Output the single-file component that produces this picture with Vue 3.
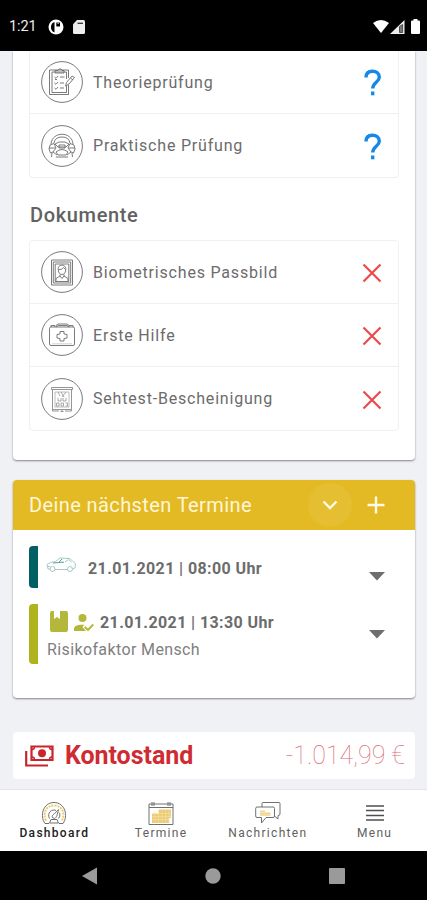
<script setup>
import { ref } from 'vue';

const exams = ref([
    { id: 'theory', label: 'Theorieprüfung' },
    { id: 'practice', label: 'Praktische Prüfung' }
]);

const documents = ref([
    { id: 'photo', label: 'Biometrisches Passbild' },
    { id: 'firstaid', label: 'Erste Hilfe' },
    { id: 'eyetest', label: 'Sehtest-Bescheinigung' }
]);

const tabs = ref([
    { id: 'dashboard', label: 'Dashboard' },
    { id: 'termine', label: 'Termine' },
    { id: 'nachrichten', label: 'Nachrichten' },
    { id: 'menu', label: 'Menu' }
]);

const activeTab = ref('dashboard');
</script>

<template>
    <div class="screen">
        <header class="statusBar">
            <span class="clock">1:21</span>
            <svg class="statusP" viewBox="0 0 16 16">
                <circle cx="8" cy="8" r="7.5" fill="#fff" />
                <path d="M6.500 13.300C1.800 12.500 1.800 3.700 6.500 2.900V13.300Z" fill="#000" />
                <path d="M8.300 3.500H12V7.500H8.300Z" fill="#000" />
                <path d="M9.500 3.500H10.800V5H9.500Z" fill="#bbb" />
            </svg>
            <svg class="statusSd" viewBox="0 0 12 14">
                <path d="M4 0H10.500Q12 0 12 1.500V12.500Q12 14 10.500 14H1.500Q0 14 0 12.500V4.200Z" fill="#eee" />
                <path d="M4.500 3.300H10" stroke="#333" stroke-width="1.300" />
            </svg>
            <div class="statusRight">
                <svg width="16" height="13" viewBox="0 0 16 13">
                    <path d="M0 3Q8-3 16 3L8 13Z" fill="#fff" />
                </svg>
                <svg width="15" height="14" viewBox="0 0 15 14">
                    <path d="M14.500 0V14H0Z" fill="#eee" />
                    <path d="M9.500 6.500V12.500H12.600V4.500Z" fill="#777" stroke="#333" stroke-width="0.800" />
                </svg>
                <svg class="battery" width="9" height="15" viewBox="0 0 9 15">
                    <path d="M2.500 0H6.500V1.500H8Q9 1.500 9 2.500V14Q9 15 8 15H1Q0 15 0 14V2.500Q0 1.500 1 1.500H2.500Z" fill="#fff" />
                </svg>
            </div>
        </header>

        <main class="content">
            <section class="card progressCard">
                <ul class="list examList">
                    <li v-for="exam in exams" :key="exam.id" class="row">
                        <svg class="rowIcon" viewBox="0 0 42 42">
                            <circle cx="21" cy="21" r="20.400" />
                            <g v-if="exam.id === 'theory'">
                                <path d="M27.500 24V33.500H8.500V9H27.500V17" />
                                <path d="M25.500 25V31.500H11V11H25.500V18" />
                                <path d="M14 12V9.500H17L18 8H20L21 9.500H23V12Z" />
                                <path d="M13.500 16L15 17.300L17 15M13.500 22L15 23.300L17 21M13.500 27L15 28.300L17 26" />
                                <path d="M19 16H23.500M19 22H23M19 27H23M14 18.500H16" />
                                <path d="M24.500 25L25.500 21.500L31 15L33.500 16.500L28 23ZM29.500 17L32 19" />
                            </g>
                            <g v-else>
                                <path d="M10 19C11 6 31 6 32 19" />
                                <path d="M13 18Q14 12 21 12T29 18" />
                                <path d="M14 19L18 17H24L28 19L25 22H17Z" />
                                <path d="M18 20H24V23H18ZM15 27Q21 22 27 27L25 30H17Z" />
                                <path d="M9 20L13 18.500L15 23L12 27L9.500 28L8 24ZM33 20L29 18.500L27 23L30 27L32.500 28L34 24Z" />
                                <path d="M8 23H14M28 23H34M12 27L16 30M30 27L26 30M11 28L10.500 32M31 28L31.500 32M15 32H27" />
                            </g>
                        </svg>
                        <span class="rowLabel">{{ exam.label }}</span>
                        <svg class="question" viewBox="0 0 18 28">
                            <path d="M2 8.500C2 4 4.800 2.200 8.500 2.200C12.400 2.200 15.300 4.300 15.300 8.200C15.300 13.200 8.700 13.300 8.700 19.500" />
                            <path d="M8.700 22.500V26.300" />
                        </svg>
                    </li>
                </ul>

                <h2>Dokumente</h2>

                <ul class="list">
                    <li v-for="doc in documents" :key="doc.id" class="row">
                        <svg class="rowIcon" viewBox="0 0 42 42">
                            <circle cx="21" cy="21" r="20.400" />
                            <g v-if="doc.id === 'photo'">
                                <path d="M10.500 9H31.500V34H10.500Z" />
                                <path d="M12.300 11H29.700V32H12.300Z" />
                                <path d="M14.200 13H27.800V30.500H14.200Z" />
                                <path d="M17.300 19C16 12.500 26 12.500 24.700 19C24.500 25 17.500 25 17.300 19ZM17.500 18.500Q21 19 22.500 16.500L24.500 18.500" />
                                <path d="M19 23.500V25L15 27.500V30.500M23 23.500V25L27 27.500V30.500M19 25L21 27.500L23 25" />
                            </g>
                            <g v-else-if="doc.id === 'firstaid'">
                                <rect x="8.500" y="13" width="25" height="18.500" rx="1.500" />
                                <path d="M10 13V11.500H14V13M28 13V11.500H32V13M15 13L17 11.500H26L28 13M15 11.500L17 10H26L28 11.500" />
                                <path d="M19 17.500H23V20L26 20.500V24L23 24.500V27H19V24.500L16 24V20.500L19 20Z" />
                                <path d="M11 29.800H31" opacity="0.35" />
                            </g>
                            <g v-else opacity="0.8">
                                <path d="M10.500 9.500H31.500V11.500H10.500ZM11.500 11.500V31.500H30.500V11.500" />
                                <path d="M14 14H28V29H14Z" opacity="0.6" />
                                <path d="M17 14L19 18M20 14L23 19M25 14L21 19M17 20V23H20V20M22 20V23H25V20M15.500 25H18V28H15.500ZM20 25H22.500V28H20ZM24.500 25H26.500V28H24.500" opacity="0.8" />
                                <path d="M11.500 31.500V33H18M30.500 31.500V33H24M21 31.500V33.500M19.500 33.500H22.500" />
                            </g>
                        </svg>
                        <span class="rowLabel">{{ doc.label }}</span>
                        <svg class="cross" viewBox="0 0 20 20">
                            <path d="M1.500 1.500L18.500 18.500M18.500 1.500L1.500 18.500" />
                        </svg>
                    </li>
                </ul>
            </section>

            <section class="card dates">
                <div class="datesHeader">
                    <span class="datesTitle">Deine nächsten Termine</span>
                    <button class="toggle">
                        <svg width="16" height="10" viewBox="0 0 16 10">
                            <path d="M1.500 1.500L8 8L14.500 1.500" />
                        </svg>
                    </button>
                    <svg class="plus" width="18" height="18" viewBox="0 0 18 18">
                        <path d="M9 0.500V17.500M0.500 9H17.500" />
                    </svg>
                </div>
                <div class="datesBody">
                    <div class="date">
                        <i class="bar teal"></i>
                        <div class="dateInfo">
                            <div class="dateLine driving">
                                <svg class="car" viewBox="0 0 31 16">
                                    <path d="M1 7.500L4.500 5.500L9.500 4.500L14 1L24 1.500L27 4.500L29.500 6.500L29 11L27 12M1 7.500L2 12H4M9 12.500H21.500M2 9.500H4M19 5L22.500 2.500L25.500 5" />
                                    <path class="carTrim" d="M7 6L15 5.300H18M16 2L13 5.300" />
                                    <circle cx="6.500" cy="12" r="2.500" />
                                    <circle cx="24" cy="12" r="2.500" />
                                </svg>
                                <b>21.01.2021 | 08:00 Uhr</b>
                            </div>
                        </div>
                        <svg class="caret" viewBox="0 0 16 9"><path d="M0 0H16L8 8.600Z" /></svg>
                    </div>
                    <div class="date theory">
                        <i class="bar lime"></i>
                        <div class="dateInfo">
                            <div class="dateLine lesson">
                                <svg class="book" viewBox="0 0 18 21">
                                    <path d="M2 0H4V8L7 6L10 8V0H16Q18 0 18 2V19Q18 21 16 21H2Q0 21 0 19V2Q0 0 2 0Z" />
                                </svg>
                                <svg class="person" viewBox="0 0 20 17">
                                    <circle cx="8.500" cy="4" r="4" />
                                    <path d="M0 17V14.500C0 11.500 5 10.200 10.500 10.800L8.500 13L12 17Z" />
                                    <path class="tick" d="M10.800 13L14 16L19.200 10.500" />
                                </svg>
                                <b>21.01.2021 | 13:30 Uhr</b>
                            </div>
                            <div class="topic">Risikofaktor Mensch</div>
                        </div>
                        <svg class="caret" viewBox="0 0 16 9"><path d="M0 0H16L8 8.600Z" /></svg>
                    </div>
                </div>
            </section>

            <section class="balance">
                <svg class="money" viewBox="0 0 29 22">
                    <path d="M6.500 1.500H27.500V15H6.500Z" />
                    <path d="M1.200 6V20.500H23" />
                    <circle cx="17" cy="8.200" r="4" />
                    <path class="corner" d="M7 4.500Q9.500 4.500 9.500 2M27 4.500Q24.500 4.500 24.500 2M7 12Q9.500 12 9.500 14.500M27 12Q24.500 12 24.500 14.500" />
                </svg>
                <span class="balanceTitle">Kontostand</span>
                <span class="amount">-1.014,99 €</span>
            </section>
        </main>

        <nav class="tabBar">
            <a v-for="tab in tabs" :key="tab.id" :class="['tab', { active: tab.id === activeTab }]" @click="activeTab = tab.id">
                <svg class="tabIcon" viewBox="0 0 26 24">
                    <g v-if="tab.id === 'dashboard'">
                        <path d="M4 22.500C-1.500 15 2 1.500 13 1.500S27.500 15 22 22.500H18M4 22.500H8" />
                        <path class="gold dashes" d="M5 19.500C1.500 12 5 4.500 13 4.500S24.500 12 21 19.500" />
                        <path d="M8.500 17.500C5.500 12 11 7.500 15 9.500M17.500 17.500C19.500 15 19 12.500 18 11.500M8.500 22L10 18.500H16L17.500 22Z" />
                        <path d="M11.500 16.500C10 14 14 13 17.500 8.500C16.500 13 15.500 17 13.500 17.500Z" />
                    </g>
                    <g v-else-if="tab.id === 'termine'">
                        <path class="goldFill" d="M11 8.500H23V17H21V22H4V13H11Z" />
                        <path class="grid" d="M4 12.500H23M4 15.500H23M4 18.500H21M7 10V22M10.500 9V22M14 9V22M17.500 9V22M21 9V22" />
                        <path d="M1 3H25V23.500H1ZM1 6.500H25" />
                        <path d="M4 1V5M6 1V5M20 1V5M22 1V5" />
                    </g>
                    <g v-else-if="tab.id === 'nachrichten'">
                        <path d="M7 6V2.500Q7 1.500 8 1.500H24Q25 1.500 25 2.500V13Q25 14.500 23 14.500V18L19.500 15" />
                        <path d="M2 6H18Q19.500 6 19.500 7.500V15Q19.500 16.500 18 16.500H11L6.500 22V16.500H2Q0.700 16.500 0.700 15V7.500Q0.700 6 2 6Z" />
                        <path class="gold" d="M5 10.300H10M5 12.300H15.500M5 14H15.500" />
                    </g>
                    <g v-else class="menuLines">
                        <path d="M4 5H22M4 9.500H22M4 14.500H22M4 19H22" />
                    </g>
                </svg>
                <span>{{ tab.label }}</span>
            </a>
        </nav>

        <footer class="systemBar">
            <svg width="15" height="18" viewBox="0 0 15 18"><path d="M15 0.500V17.500L0 9Z" /></svg>
            <svg width="16" height="16" viewBox="0 0 16 16"><circle cx="8" cy="8" r="7.700" /></svg>
            <svg width="16" height="16" viewBox="0 0 16 16"><rect width="16" height="16" rx="0.800" /></svg>
        </footer>
    </div>
</template>

<style>
body {
    margin: 0;
    background-color: #eff1f5;
}
</style>

<style scoped>
.screen {
    display: flex;
    flex-direction: column;
    width: 427px;
    height: 900px;
    overflow: hidden;
    background-color: #eff1f5;
    font-family: Roboto, "Liberation Sans", sans-serif;
    color: #6c6c6c;
}

svg {
    display: block;
    flex: none;
}

.statusBar {
    display: flex;
    align-items: center;
    box-sizing: border-box;
    flex: none;
    height: 51px;
    padding: 2px 7px 0 9px;
    background-color: #000;
    color: #eee;
}

.clock {
    width: 39px;
    font-size: 14.5px;
    letter-spacing: -0.1px;
}

.statusP {
    width: 16px;
    height: 16px;
}

.statusSd {
    width: 12px;
    height: 14px;
    margin-left: 9px;
}

.statusRight {
    display: flex;
    align-items: center;
    gap: 1px;
    margin-left: auto;
}

.battery {
    margin-left: 5px;
}

.content {
    flex: none;
    height: 738px;
    padding: 0 12px 0 13px;
}

.card {
    box-sizing: border-box;
    background-color: #fff;
    border-radius: 4px;
    box-shadow: 0 1px 2px rgba(0, 0, 0, 0.45);
}

.progressCard {
    height: 409px;
    padding: 0 16px;
    border-radius: 0 0 4px 4px;
}

.list {
    box-sizing: border-box;
    height: 191px;
    margin: 0;
    padding: 0;
    border: 1px solid #f0f0f0;
    border-radius: 4px;
    list-style: none;
}

.examList {
    height: 127px;
    border-top: none;
    border-radius: 0 0 4px 4px;
}

.row {
    display: flex;
    align-items: center;
    box-sizing: border-box;
    height: 63px;
    padding: 0 16px 0 11px;
    border-bottom: 1px solid #f0f0f0;
}

.row:last-child {
    border-bottom: none;
}

.rowIcon {
    width: 42px;
    height: 42px;
    fill: none;
    stroke: #6c6c6c;
    stroke-width: 0.9;
}

.rowLabel {
    flex: 1;
    margin-left: 10px;
    font-size: 16px;
    letter-spacing: 0.81px;
}

.question {
    width: 18px;
    height: 28px;
    margin-top: 2px;
    fill: none;
    stroke: #1489e8;
    stroke-width: 3.4;
}

.cross {
    width: 20px;
    height: 20px;
    margin-top: 2px;
    fill: none;
    stroke: #f04848;
    stroke-width: 2.2;
}

h2 {
    margin: 0 0 0 1px;
    height: 62px;
    line-height: 74px;
    font-size: 20px;
    font-weight: 500;
    letter-spacing: 0.65px;
    color: #626262;
}

.dates {
    height: 218px;
    margin-top: 20px;
    overflow: hidden;
}

.datesHeader {
    display: flex;
    align-items: center;
    box-sizing: border-box;
    height: 49.5px;
    padding: 0 30px 0 16px;
    background-color: #e3ba24;
    color: #fff6d8;
}

.datesTitle {
    flex: 1;
    font-size: 20px;
    letter-spacing: 0.4px;
}

.toggle {
    display: flex;
    align-items: center;
    justify-content: center;
    width: 44px;
    height: 44px;
    padding: 0;
    border: none;
    border-radius: 50%;
    background-color: #e5be32;
}

.toggle svg,
.plus {
    fill: none;
    stroke: #fffbe8;
    stroke-width: 2.4;
}

.plus {
    margin-left: 15px;
}

.datesBody {
    display: flex;
    flex-direction: column;
    gap: 16px;
    padding: 16.5px 30px 0 16px;
}

.date {
    display: flex;
    height: 42px;
}

.theory {
    height: 60px;
}

.bar {
    width: 9px;
    border-radius: 4px 0 0 4px;
}

.teal {
    background-color: #006064;
}

.lime {
    background-color: #afb41c;
}

.dateInfo {
    flex: 1;
}

.dateLine {
    display: flex;
    align-items: center;
    font-size: 16px;
    letter-spacing: 0.4px;
}

.dateLine b {
    font-weight: 700;
    color: #6c6c6c;
}

.driving {
    height: 44px;
}

.car {
    width: 31px;
    height: 16px;
    margin: -6px 11px 0 8px;
    fill: none;
    stroke: #9cc2c1;
    stroke-width: 0.9;
}

.carTrim {
    stroke: #4f9290;
}

.lesson {
    height: 36px;
}

.book {
    width: 18px;
    height: 21px;
    margin: -2px 6px 0 12px;
    fill: #b4b83a;
}

.person {
    width: 20px;
    height: 17px;
    margin-right: 6px;
    fill: #b4b83a;
}

.tick {
    fill: none;
    stroke: #b4b83a;
    stroke-width: 2;
}

.topic {
    margin-left: 9px;
    font-size: 16px;
    line-height: 19px;
    letter-spacing: 0.38px;
    color: #808080;
}

.caret {
    width: 16px;
    height: 9px;
    margin-top: 26px;
    fill: #6e6e6e;
}

.balance {
    display: flex;
    align-items: center;
    box-sizing: border-box;
    height: 47px;
    margin-top: 34px;
    padding: 0 10px 0 12px;
    border-radius: 4px;
    background-color: #fff;
}

.money {
    width: 29px;
    height: 22px;
    margin-top: 1px;
    fill: none;
    stroke: #c9252c;
    stroke-width: 2.2;
}

.money circle {
    fill: #c9252c;
    stroke: none;
}

.money .corner {
    stroke-width: 1.4;
}

.balanceTitle {
    flex: 1;
    margin-left: 11px;
    font-size: 25px;
    font-weight: 700;
    letter-spacing: -0.05px;
    color: #cf2b33;
}

.amount {
    font-size: 25px;
    font-weight: 100;
    color: #db6b77;
}

.tabBar {
    display: flex;
    box-sizing: border-box;
    flex: none;
    height: 62px;
    padding-left: 1px;
    border-top: 1px solid #e4e6ea;
    background-color: #fff;
}

.tab {
    display: flex;
    flex-direction: column;
    align-items: center;
    width: 106.75px;
    flex: none;
    padding-top: 11px;
    font-size: 12px;
    line-height: 14px;
    letter-spacing: 1.3px;
    color: #606060;
}

.active {
    color: #222;
    font-weight: 500;
}

.tabIcon {
    width: 26px;
    height: 24px;
    margin-bottom: 1px;
    fill: none;
    stroke: #707070;
    stroke-width: 1;
}

.gold {
    stroke: #f0d48c;
    stroke-width: 1.5;
}

.dashes {
    stroke: #eccb6b;
    stroke-width: 2;
    stroke-dasharray: 2 1;
}

.goldFill {
    fill: #eccb74;
    stroke: none;
}

.grid {
    stroke: #f5dfa5;
    stroke-width: 0.7;
}

.menuLines {
    stroke: #505050;
    stroke-width: 1.7;
}

.systemBar {
    display: flex;
    align-items: center;
    justify-content: center;
    gap: 108px;
    flex: none;
    height: 49px;
    background-color: #000;
}

.systemBar svg {
    fill: #9a9a9a;
}
</style>
